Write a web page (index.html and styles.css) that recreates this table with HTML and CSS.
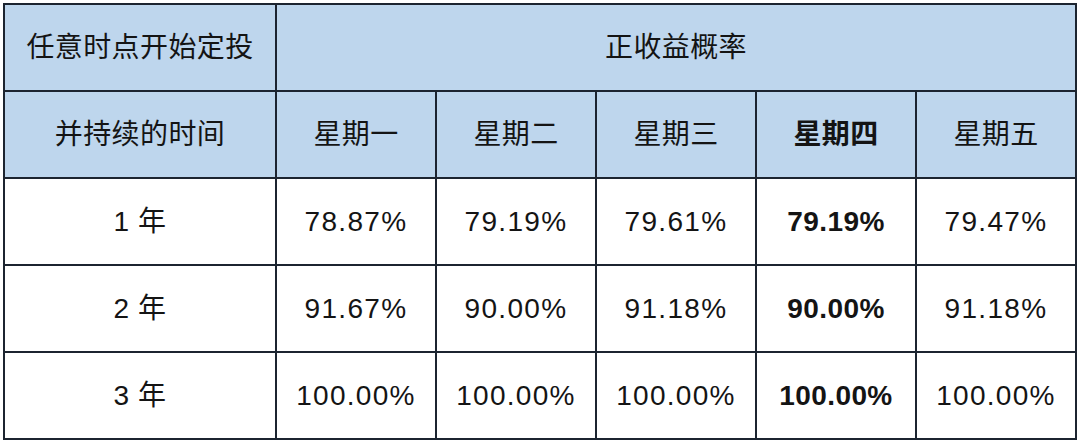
FILE: index.html
```html
<!DOCTYPE html>
<html lang="zh-CN">
<head>
<meta charset="utf-8">
<title>正收益概率</title>
<link rel="stylesheet" href="styles.css">
</head>
<body>
<table class="prob">
  <colgroup>
    <col class="c-first">
    <col class="c-day"><col class="c-day"><col class="c-day"><col class="c-day"><col class="c-day">
  </colgroup>
  <thead>
    <tr>
      <th class="head">任意时点开始定投</th>
      <th class="head" colspan="5">正收益概率</th>
    </tr>
    <tr>
      <th class="head">并持续的时间</th>
      <th class="head">星期一</th>
      <th class="head">星期二</th>
      <th class="head">星期三</th>
      <th class="head bold">星期四</th>
      <th class="head">星期五</th>
    </tr>
  </thead>
  <tbody>
    <tr>
      <td class="label">1 年</td>
      <td class="num">78.87%</td>
      <td class="num">79.19%</td>
      <td class="num">79.61%</td>
      <td class="num bold">79.19%</td>
      <td class="num">79.47%</td>
    </tr>
    <tr>
      <td class="label">2 年</td>
      <td class="num">91.67%</td>
      <td class="num">90.00%</td>
      <td class="num">91.18%</td>
      <td class="num bold">90.00%</td>
      <td class="num">91.18%</td>
    </tr>
    <tr>
      <td class="label">3 年</td>
      <td class="num">100.00%</td>
      <td class="num">100.00%</td>
      <td class="num">100.00%</td>
      <td class="num bold">100.00%</td>
      <td class="num">100.00%</td>
    </tr>
  </tbody>
</table>
</body>
</html>
```
FILE: styles.css
```css
html, body {
  margin: 0;
  padding: 0;
  background: #ffffff;
}
body {
  padding: 3px 0 0 3px;
  font-family: "Liberation Sans", "Noto Sans CJK SC", sans-serif;
  color: #141414;
}
.prob {
  border-collapse: collapse;
  table-layout: fixed;
  width: 1074px;
  border: 2px solid #1c2430;
}
.c-first { width: 272px; }
.prob th, .prob td {
  border: 2px solid #1c2430;
  height: 85px;
  padding: 0;
  text-align: center;
  vertical-align: middle;
  font-size: 28px;
  font-weight: normal;
  line-height: 1;
}
.head {
  background: #bed6ed;
  letter-spacing: 0.4px;
}
.num {
  letter-spacing: 1.3px;
}
.label {
  letter-spacing: 0.5px;
}
.num.bold {
  font-weight: bold;
  letter-spacing: 0.4px;
}
.head.bold {
  font-weight: bold;
}
```
